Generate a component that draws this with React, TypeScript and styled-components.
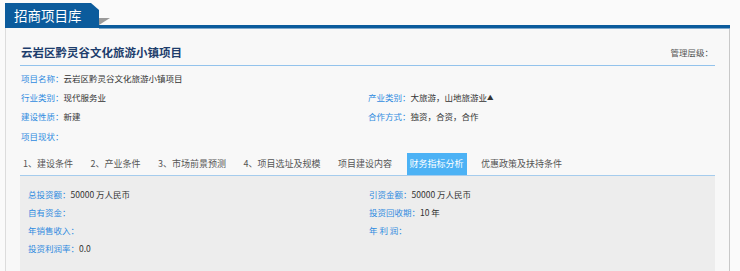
import React from "react";
import styled, { createGlobalStyle } from "styled-components";

const Global = createGlobalStyle`
  html, body { margin: 0; padding: 0; background: #fafafa; }
  body { font-family: "Noto Sans CJK SC", "Microsoft YaHei", sans-serif; }
  * { box-sizing: border-box; }
`;

const Page = styled.div`
  width: 740px;
  height: 271px;
  overflow: hidden;
  padding: 3px 10px 0 5px;
  display: flex;
  flex-direction: column;
`;

const Header = styled.div`
  display: flex;
  height: 25px;
  flex-shrink: 0;
`;

const HeaderTab = styled.div`
  width: 94px;
  height: 25px;
  background: #0b5b9c;
  color: #fff;
  font-size: 13.5px;
  line-height: 25px;
  padding-left: 9px;
  clip-path: polygon(0 0, 86px 0, 100% 7px, 100% 100%, 0 100%);
`;

const HeaderRule = styled.div`
  flex: 1;
  position: relative;
  border-bottom: 3px solid #0b5b9c;
  box-shadow: 0 1px 0 #7fa9cc;
  &::before {
    content: "";
    position: absolute;
    left: 0;
    bottom: 0;
    border-top: 7px solid #9a9a9a;
    border-right: 11px solid transparent;
  }
`;

const Panel = styled.div`
  flex: 1;
  background: #f8f8f8;
  border-left: 1px solid #dcdcdc;
  border-right: 1px solid #c8c8c8;
  padding: 17px 14px 0 14px;
  display: flex;
  flex-direction: column;
`;

const TitleRow = styled.div`
  display: flex;
  justify-content: space-between;
  align-items: center;
  height: 14px;
  box-sizing: content-box;
  padding-bottom: 6px;
  border-bottom: 1px solid #93c3ec;
`;

const Title = styled.div`
  font-size: 11.5px;
  font-weight: bold;
  color: #1d3d6c;
  line-height: 14px;
  padding-left: 1px;
`;

const Level = styled.div`
  font-size: 8.5px;
  color: #555;
  padding-right: 2px;
`;

const InfoGrid = styled.div<{ $left: number; $rowH: number }>`
  display: grid;
  grid-template-columns: ${(p) => p.$left}px 1fr;
  grid-auto-rows: ${(p) => p.$rowH}px;
  align-items: center;
  font-size: 8.5px;
`;

const InfoBlock = styled(InfoGrid)`
  padding-top: 2.5px;
  padding-left: 1px;
`;

const Field = styled.div<{ $full?: boolean }>`
  grid-column: ${(p) => (p.$full ? "1 / span 2" : "auto")};
  white-space: nowrap;
  color: #333;
`;

const Label = styled.span`
  color: #2f8be0;
`;

const Mark = styled.span`
  font-size: 6.5px;
  vertical-align: 1px;
`;

const Tabs = styled.div`
  display: flex;
  gap: 11.5px;
  height: 23px;
  margin-top: 8px;
  border-bottom: 1px solid #a5cced;
  flex-shrink: 0;
`;

const Tab = styled.div<{ $active?: boolean }>`
  padding: 0 3px;
  font-size: 9px;
  line-height: 22px;
  white-space: nowrap;
  color: ${(p) => (p.$active ? "#fff" : "#555")};
  background: ${(p) => (p.$active ? "#4cb2f5" : "transparent")};
`;

const Content = styled(InfoGrid)`
  flex: 1;
  background: #ededed;
  padding: 8.5px 0 0 8px;
  align-content: start;
`;

const tabs = [
  "1、建设条件",
  "2、产业条件",
  "3、市场前景预测",
  "4、项目选址及规模",
  "项目建设内容",
  "财务指标分析",
  "优惠政策及扶持条件",
];

export default function App() {
  return (
    <>
      <Global />
      <Page>
        <Header>
          <HeaderTab>招商项目库</HeaderTab>
          <HeaderRule />
        </Header>
        <Panel>
          <TitleRow>
            <Title>云岩区黔灵谷文化旅游小镇项目</Title>
            <Level>管理层级：</Level>
          </TitleRow>
          <InfoBlock $left={347} $rowH={19.2}>
            <Field $full>
              <Label>项目名称：</Label>云岩区黔灵谷文化旅游小镇项目
            </Field>
            <Field>
              <Label>行业类别：</Label>现代服务业
            </Field>
            <Field>
              <Label>产业类别：</Label>大旅游，山地旅游业<Mark>▲</Mark>
            </Field>
            <Field>
              <Label>建设性质：</Label>新建
            </Field>
            <Field>
              <Label>合作方式：</Label>独资，合资，合作
            </Field>
            <Field $full>
              <Label>项目现状：</Label>
            </Field>
          </InfoBlock>
          <Tabs>
            {tabs.map((t) => (
              <Tab key={t} $active={t === "财务指标分析"}>
                {t}
              </Tab>
            ))}
          </Tabs>
          <Content $left={341} $rowH={18.2}>
            <Field>
              <Label>总投资额：</Label>50000 万人民币
            </Field>
            <Field>
              <Label>引资金额：</Label>50000 万人民币
            </Field>
            <Field>
              <Label>自有资金：</Label>
            </Field>
            <Field>
              <Label>投资回收期：</Label>10 年
            </Field>
            <Field>
              <Label>年销售收入：</Label>
            </Field>
            <Field>
              <Label>年 利 润：</Label>
            </Field>
            <Field $full>
              <Label>投资利润率：</Label>0.0
            </Field>
          </Content>
        </Panel>
      </Page>
    </>
  );
}
